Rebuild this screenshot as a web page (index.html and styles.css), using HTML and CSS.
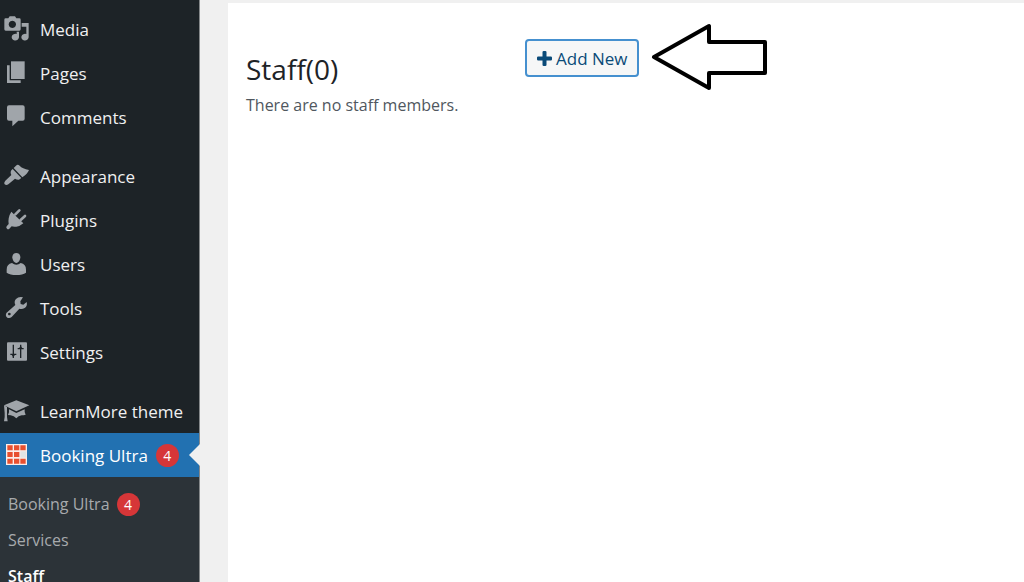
FILE: index.html
```html
<!DOCTYPE html>
<html lang="en">
<head>
  <meta charset="UTF-8" />
  <meta name="viewport" content="width=device-width, initial-scale=1" />
  <title>Staff - Booking Ultra</title>
  <link rel="stylesheet" href="styles.css">
</head>
<body>
  <div class="layout">
    <nav class="sidebar" aria-label="Main menu">
      <ul class="menu">
        <li>
          <a class="menu-link" href="#media">
            <svg class="icon" viewBox="12 21 78 78" aria-hidden="true">
              <path fill-rule="evenodd" d="M17 28h8l4-6h16l4 6h9q4 0 4 4v29q0 4-4 4H17q-4 0-4-4V32q0-4 4-4zM37 35a11 11 0 1 0 .1 0z"/>
              <path d="M65 42h21v43a11 10 0 1 1-7-10V53H65z"/>
              <path d="M50 68h7v17a11 10 0 1 1-7-10z"/>
            </svg>
            Media
          </a>
        </li>
        <li>
          <a class="menu-link" href="#pages">
            <svg class="icon" viewBox="12 3 78 78" aria-hidden="true">
              <path d="M33 7h41v53H33z"/>
              <path d="M21 19h8v45h33v8H21z"/>
            </svg>
            Pages
          </a>
        </li>
        <li>
          <a class="menu-link" href="#comments">
            <svg class="icon" viewBox="12 135 78 78" aria-hidden="true">
              <path d="M27 139h41q6 0 6 6v34q0 6-6 6H55l-18 17v-17H27q-6 0-6-6v-34q0-6 6-6z"/>
            </svg>
            Comments
          </a>
        </li>
        <li class="group-start">
          <a class="menu-link" href="#appearance">
            <svg class="icon" viewBox="12 24 78 78" aria-hidden="true">
              <path d="M48 32q5-5 11 0 8 9 28 13-4 11-20 22L41 39z"/>
              <path d="M38 42l26 27-7 5q-6 1-12-3L25 88q-6 4-11 0-3-5 2-11l18-17q-4-8 0-14z"/>
            </svg>
            Appearance
          </a>
        </li>
        <li>
          <a class="menu-link" href="#plugins">
            <svg class="icon" viewBox="12 156 78 78" aria-hidden="true">
              <path d="M34 170l36 35q-10 9-21 10-9 1-14-1l-7 7q-4 3-7 0-4-3-1-7l6-7q-3-20 8-37z"/>
              <path class="prong" d="M46 178l12-12M62 195l13-12"/>
            </svg>
            Plugins
          </a>
        </li>
        <li>
          <a class="menu-link" href="#users">
            <svg class="icon" viewBox="12 18 78 78" aria-hidden="true">
              <path d="M49 24c8 0 12 6 12 13s-5 17-12 17-12-10-12-17 4-13 12-13z"/>
              <path d="M36 54q6 5 13 5t13-5q16 3 16 20v9q-10 7-29 7t-29-7v-9q0-17 16-20z"/>
            </svg>
            Users
          </a>
        </li>
        <li>
          <a class="menu-link" href="#tools">
            <svg class="icon" viewBox="12 150 78 78" aria-hidden="true">
              <path fill-rule="evenodd" d="M69 157l-8 12 1 8 8 2 10-8q3 12-6 18-8 5-16 2l-23 25q-6 5-13 2-7-5-3-14l27-24q-5-10 2-18 8-8 21-5zM28 203a4 4 0 1 0 .1 0z"/>
            </svg>
            Tools
          </a>
        </li>
        <li>
          <a class="menu-link" href="#settings">
            <svg class="icon" viewBox="12 12 78 78" aria-hidden="true">
              <path d="M24 22h54q3 0 3 3v49q0 3-3 3H24q-3 0-3-3V25q0-3 3-3z"/>
              <path class="slider" d="M40 29v40M31 58h18M62 29v40M53 41h18"/>
              <path class="knob" d="M34 58h12l-6 9zM56 41h12l-6-9z"/>
            </svg>
            Settings
          </a>
        </li>
        <li class="group-start">
          <a class="menu-link" href="#learnmore">
            <svg class="icon" viewBox="12 186 78 78" aria-hidden="true">
              <path d="M49 193l39 15-39 18-37-18z"/>
              <path d="M12 208l9 5v30l2 13H12q3-12 2-25z"/>
              <path d="M27 220l22 11 25-11v8l3 8q-6 2-12 2-10 1-16 9-7-8-17-9l-8-1 3-8z"/>
            </svg>
            LearnMore theme
          </a>
        </li>
        <li class="current">
          <a class="menu-link" href="#booking">
            <svg class="icon" viewBox="12 33 78 78" aria-hidden="true">
              <path fill="#fbeeea" d="M18 39h63v63H18z"/>
              <path fill="#e8502f" d="M22 43h16v15H22zM42 43h16v15H42zM61 43h16v15H61zM22 63h16v15H22zM42 63h16v15H42zM22 83h16v15H22zM42 83h16v15H42zM61 83h16v15H61z"/>
              <path fill="#e0e3e5" d="M61 61h18v19H61z"/>
            </svg>
            Booking Ultra
            <span class="badge">4</span>
          </a>
          <ul class="submenu">
            <li><a href="#dashboard">Booking Ultra <span class="badge">4</span></a></li>
            <li><a href="#services">Services</a></li>
            <li><a class="active" href="#staff">Staff</a></li>
          </ul>
        </li>
      </ul>
    </nav>

    <main class="content">
      <section class="panel">
        <div class="staff-header">
          <div class="staff-info">
            <h1>Staff(0)</h1>
            <p>There are no staff members.</p>
          </div>
          <button type="button" class="add-button">
            <svg class="plus" viewBox="0 0 15 15" aria-hidden="true">
              <path d="M7 0h1q1 0 1 1v5h5q1 0 1 1v1q0 1-1 1H9v5q0 1-1 1H7q-1 0-1-1V9H1q-1 0-1-1V7q0-1 1-1h5V1q0-1 1-1z"/>
            </svg>
            Add New
          </button>
          <svg class="arrow" viewBox="0 0 117 70" aria-hidden="true">
            <path d="M3 35L58 4v16h56v31H58v15z"/>
          </svg>
        </div>
      </section>
    </main>
  </div>
</body>
</html>
```
FILE: styles.css
```css
* {
  box-sizing: border-box;
}
body {
  font-family: "Segoe UI", "Open Sans", "Noto Sans", sans-serif;
  background: #f0f0f0;
  color: #50575e;
  margin: 0;
}
ul {
  list-style: none;
  margin: 0;
  padding: 0;
}
a {
  text-decoration: none;
}
.layout {
  display: flex;
  height: 100vh;
  overflow: hidden;
}

/* Sidebar */
.sidebar {
  flex: 0 0 200px;
  background: #1d2327;
  border-right: 1px solid #85888a;
}
.menu {
  padding-top: 7px;
}
.menu-link {
  display: flex;
  align-items: center;
  gap: 10px;
  height: 44px;
  padding-left: 4px;
  font-size: 17px;
  color: #f0f0f1;
  white-space: nowrap;
}
.group-start {
  margin-top: 15px;
}
.icon {
  flex: none;
  width: 26px;
  height: 26px;
  fill: #a0a5aa;
}
.prong {
  stroke: #a0a5aa;
  stroke-width: 8;
  stroke-linecap: round;
}
.slider {
  stroke: #1d2327;
  stroke-width: 4;
}
.knob {
  fill: #1d2327;
}
.badge {
  display: inline-flex;
  align-items: center;
  justify-content: center;
  width: 23px;
  height: 23px;
  border-radius: 50%;
  background: #d63638;
  color: #fff;
  font-size: 14px;
}
.current .menu-link {
  position: relative;
  background: #2271b1;
  color: #fff;
}
.menu-link .badge {
  margin-left: -2px;
}
/* Notch pointing at the open menu item */
.current .menu-link::after {
  content: "";
  position: absolute;
  right: -1px;
  top: 11px;
  border: 11px solid transparent;
  border-left-width: 0;
  border-right-color: #f0f0f0;
}
.submenu {
  padding: 9px 0;
  background: #2c3338;
}
.submenu a {
  display: flex;
  align-items: center;
  gap: 7px;
  height: 36px;
  padding-left: 8px;
  font-size: 16px;
  color: #a7aaad;
}
.submenu .active {
  color: #fff;
  font-weight: 600;
}

/* Content */
.content {
  flex: 1;
  display: flex;
  padding: 3px 0 0 28px;
}
.panel {
  flex: 1;
  background: #fff;
  padding: 19px 18px;
}
.staff-header {
  display: flex;
  align-items: flex-start;
}
.staff-info {
  flex: 0 0 279px;
  padding-top: 27px;
}
h1 {
  margin: 0;
  font-size: 28px;
  font-weight: 400;
  line-height: 40px;
  color: #1d2327;
}
p {
  margin: 5px 0 0;
  font-size: 16px;
  line-height: 22px;
}
.add-button {
  display: flex;
  align-items: center;
  gap: 4px;
  height: 38px;
  margin-top: 17px;
  padding: 0 9px 0 10px;
  border: 2px solid #4590cf;
  border-radius: 4px;
  background: #f6f7f7;
  color: #0a4b78;
  font-family: inherit;
  font-size: 17px;
  white-space: nowrap;
}
.plus {
  width: 15px;
  height: 15px;
  fill: #0a4b78;
  stroke: #0a4b78;
}
.arrow {
  flex: none;
  width: 117px;
  height: 70px;
  margin-left: 12px;
  fill: #fff;
  stroke: #000;
  stroke-width: 4;
  stroke-linejoin: round;
}
```
